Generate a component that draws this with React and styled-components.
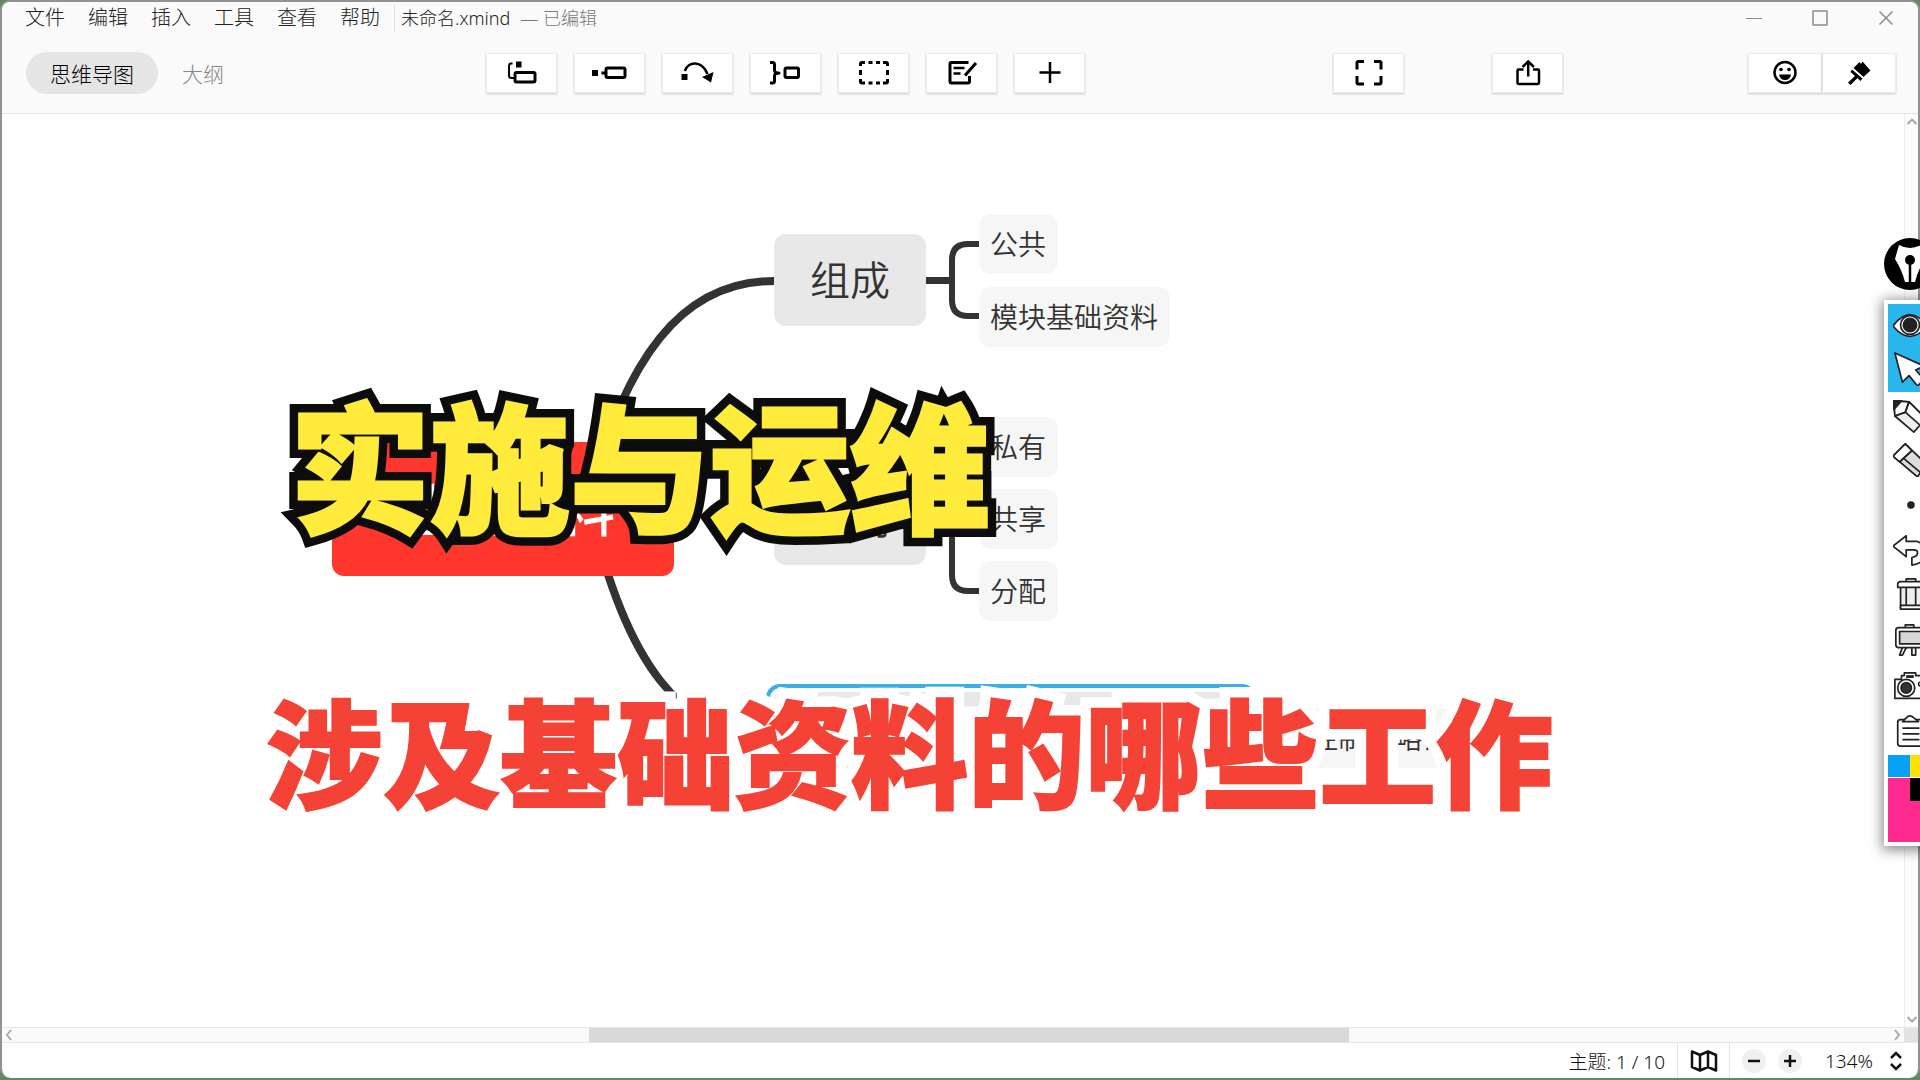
import React, { useState } from 'react';
import styled, { createGlobalStyle, css } from 'styled-components';

const GlobalStyle = createGlobalStyle`
    * {
        box-sizing: border-box;
    }
    body {
        margin: 0;
        background-color: #5f8c5f;
        font-family: "Noto Sans", "Noto Sans CJK SC", sans-serif;
        font-weight: 300;
        color: #222;
    }
    button {
        padding: 0;
        border: 0;
        background: transparent;
        color: inherit;
        font: inherit;
        cursor: pointer;
    }
    svg {
        display: block;
    }
`;

const Page = styled.div`
    position: relative;
    display: flex;
    flex-direction: column;
    min-height: 100vh;
    padding: 0 0 2px;
    overflow: hidden;
`;

const AppWindow = styled.div`
    flex: 1;
    display: flex;
    flex-direction: column;
    background-color: #fff;
    border: 2px solid #929292;
    border-bottom: 0;
    border-radius: 10px;
    overflow: hidden;
`;

const TitleBar = styled.header`
    display: flex;
    align-items: center;
    height: 32px;
    padding: 0 24px 0 23px;
    background-color: #fafafa;
`;

const Menu = styled.nav`
    display: flex;
    gap: 23px;
    font-size: 20px;
    line-height: 28px;
    padding: 0 14px 0 0;
    border-right: 1px solid #e2e2e2;
`;

const FileName = styled.span`
    font-size: 18px;
    line-height: 28px;
    margin: 0 0 0 6px;
`;

const FileState = styled(FileName)`
    margin: 0 0 0 10px;
    color: #777;
`;

const WindowButtons = styled.div`
    display: flex;
    gap: 50px;
    margin: 0 0 0 auto;
    color: #8c8c8c;
`;

const Toolbar = styled.div`
    display: grid;
    grid-template-columns: 484fr 847fr 159fr 256fr 170fr;
    align-items: center;
    padding: 18px 0 19px;
    background-color: #fafafa;
    border-bottom: 1px solid #e4e4e4;
`;

const Tabs = styled.div`
    display: flex;
    align-items: center;
    padding: 0 0 0 24px;
`;

const Tab = styled.button`
    height: 42px;
    padding: 0 24px 1px;
    border-radius: 21px;
    font-size: 21px;
    color: #858585;
    ${({ $active }) => $active && css`
        background-color: #e5e5e5;
        color: #000;
    `}
`;

const Tools = styled.div`
    display: flex;
    gap: 17px;
`;

const ToolButton = styled.button`
    display: flex;
    justify-content: center;
    align-items: center;
    width: ${({ $wide }) => ($wide ? 74 : 71)}px;
    height: 40px;
    background-color: #fff;
    border: 1px solid #ececec;
    box-shadow: 0 1px 2px #0003;
    color: #000;
`;

const ToolPair = styled.div`
    display: flex;
    & > button + button {
        border-left: 1px solid #e4e4e4;
    }
`;

const Workspace = styled.div`
    flex: 1;
    display: flex;
    min-height: 500px;
`;

const Canvas = styled.main`
    flex: 1;
    position: relative;
`;

const Links = styled.svg`
    position: absolute;
    left: 0;
    top: 0;
    overflow: visible;
    fill: none;
    stroke: #333;
`;

const Node = styled.div`
    position: absolute;
    left: ${({ $x }) => $x}px;
    top: ${({ $y }) => $y}px;
    display: flex;
    justify-content: center;
    align-items: center;
    white-space: nowrap;
    border-radius: 12px;
    font-family: "Noto Sans CJK SC", sans-serif;
    font-weight: 350;
    color: #333;
`;

const Root = styled(Node)`
    width: 342px;
    height: 134px;
    padding: 0 0 6px;
    background-color: #ff372c;
    color: #fff;
    font-size: 56px;
    font-weight: 500;
`;

const Topic = styled(Node)`
    min-width: 152px;
    height: 92px;
    padding: 0 0 4px;
    background-color: #e8e8e8;
    font-size: 40px;
    ${({ $selected }) => $selected && css`
        width: 474px;
        border-radius: 6px;
        outline: 4px solid #3aaee5;
        outline-offset: 4px;
    `}
`;

const Subtopic = styled(Node)`
    height: 60px;
    padding: 0 12px 2px 11px;
    background-color: #f6f6f6;
    font-size: 28px;
`;

const Caption = styled.p`
    position: absolute;
    z-index: 1;
    margin: 0;
    white-space: nowrap;
    font-family: "Noto Sans CJK SC", sans-serif;
    font-weight: 900;
    &::before {
        content: attr(data-text);
        position: absolute;
        left: 0;
        top: 0;
        z-index: -1;
    }
`;

const Headline = styled(Caption)`
    left: 288px;
    top: 277px;
    font-size: 140px;
    line-height: 140px;
    color: #ffeb3b;
    -webkit-text-stroke: 3px #ffeb3b;
    &::before {
        -webkit-text-stroke: 20px #0c0c0c;
    }
`;

const Subline = styled(Caption)`
    left: 264px;
    top: 576px;
    font-size: 117px;
    line-height: 117px;
    color: #f44336;
    -webkit-text-stroke: 2px #f44336;
    &::before {
        -webkit-text-stroke: 23px #fff;
    }
`;

const VerticalScroll = styled.div`
    display: flex;
    flex-direction: column;
    justify-content: space-between;
    align-items: center;
    width: 14px;
    padding: 2px 0;
    border-left: 1px solid #ececec;
    background-color: #fcfcfc;
    color: #aaa;
`;

const HorizontalScroll = styled.div`
    display: flex;
    align-items: stretch;
    height: 16px;
    border: solid #e6e6e6;
    border-width: 1px 0;
    background-color: #fafafa;
    color: #aaa;
`;

const ScrollTrack = styled.div`
    flex: 1;
    display: grid;
    grid-template-columns: 572fr 760fr 540fr;
`;

const ScrollThumb = styled.div`
    grid-column: 2;
    background-color: #d9d9d9;
`;

const ScrollCorner = styled.div`
    width: 14px;
    background-color: #e2e2e2;
`;

const ScrollArrow = styled.button`
    display: flex;
    justify-content: center;
    align-items: center;
    width: 14px;
`;

const StatusBar = styled.footer`
    display: flex;
    justify-content: flex-end;
    align-items: stretch;
    height: 35px;
    padding: 0 14px 0 0;
    font-size: 19px;
    color: #111;
`;

const TopicCount = styled.span`
    display: flex;
    align-items: center;
    padding: 0 12px 0 0;
`;

const MapButton = styled.button`
    display: flex;
    justify-content: center;
    align-items: center;
    width: 53px;
    border: solid #e4e4e4;
    border-width: 0 1px;
`;

const ZoomArea = styled.div`
    display: flex;
    align-items: center;
    gap: 12px;
    padding: 0 0 0 12px;
`;

const RoundButton = styled.button`
    display: flex;
    justify-content: center;
    align-items: center;
    width: 24px;
    height: 24px;
    border-radius: 12px;
    background-color: #f0f0f0;
`;

const ZoomValue = styled.button`
    display: flex;
    align-items: center;
    gap: 15px;
    padding: 0 0 0 11px;
`;

const PenBadge = styled.button`
    position: absolute;
    right: -16px;
    top: 238px;
    z-index: 2;
`;

const Palette = styled.aside`
    position: absolute;
    right: -16px;
    top: 300px;
    z-index: 2;
    width: 52px;
    padding: 4px;
    background-color: #fff;
    box-shadow: 0 2px 12px 2px #0007;
`;

const PaletteButton = styled.button`
    display: flex;
    justify-content: center;
    align-items: center;
    width: 44px;
    height: ${({ $height }) => $height || 45}px;
    background-color: ${({ $active }) => ($active ? '#29b6ec' : '#fff')};
`;

const Swatches = styled.div`
    display: grid;
    grid-template-columns: 22px 22px;
    grid-template-rows: 22px 23px 40px;
    row-gap: 1px;
`;

const Swatch = styled.button`
    background-color: ${({ $color }) => $color};
    &.current {
        grid-area: 2 / 1 / 4 / 3;
    }
    &.black {
        grid-area: 2 / 2 / 3 / 3;
    }
`;

const Icon = ({ children, width = 36, height = 28, box }) => (
    <svg width={width} height={height} viewBox={box || `0 -1 ${width} ${height}`}
        fill="none" stroke="currentColor" strokeWidth="3" strokeLinejoin="round" aria-hidden="true">
        {children}
    </svg>
);

const Chevron = ({ d }) => (
    <Icon width={12} height={12} box="0 0 12 12"><path strokeWidth="2" d={d} /></Icon>
);

const tools = [
    {
        name: '主题',
        icon: <>
            <rect x="12" y="1.5" width="5.5" height="6" fill="currentColor" stroke="none" />
            <rect x="11" y="12.5" width="20" height="9.5" rx="1.5" />
            <path strokeWidth="2" d="M8.5 3.5H7Q5 3.5 5 6V15.5Q5 18 7.5 18H10" />
        </>,
    },
    {
        name: '子主题',
        icon: <>
            <rect x="0" y="10" width="6" height="6" fill="currentColor" stroke="none" />
            <rect x="14" y="8" width="19" height="9.5" rx="1.5" />
            <path d="M9.5 13H14" />
        </>,
    },
    {
        name: '联系',
        icon: <>
            <rect x="1.5" y="14" width="6" height="6" fill="currentColor" stroke="none" />
            <path strokeWidth="2.5" d="M4.8 11C8 1 22 0 27.5 14" />
            <path fill="currentColor" stroke="none" d="M22 17L33.5 12L31 22.5Z" />
        </>,
    },
    {
        name: '概要',
        icon: <>
            <path d="M2 2.5H4.5Q6.5 2.5 6.5 4.5V10Q6.5 13 11 13Q6.5 13 6.5 16V21Q6.5 23 4.5 23H2" />
            <rect x="17" y="8" width="13.5" height="9.5" rx="1.5" />
        </>,
    },
    {
        name: '外框',
        icon: <path d="M4.5 6V4Q4.5 2.5 6 2.5H9M12.5 2.5H16.5M20 2.5H24M27 2.5H30Q31.5 2.5 31.5 4V6M31.5 10V15M31.5 19V21.5Q31.5 23 30 23H27M24 23H20M16.5 23H12.5M9 23H6Q4.5 23 4.5 21.5V19M4.5 15V10" />,
    },
    {
        name: '笔记',
        icon: <>
            <path d="M24.5 2.5H7.5Q6 2.5 6 4V21.5Q6 23 7.5 23H24Q25.5 23 25.5 21.5V16" />
            <path strokeWidth="2.5" d="M9.5 8H20.5M9.5 13.5H16.5" />
            <path d="M32 3L21 15.5" />
        </>,
    },
    { name: '插入', icon: <path strokeWidth="2.5" d="M18 2V23M7.5 12.5H28.5" /> },
];

const paletteItems = [
    {
        name: '显示', height: 41, active: true,
        icon: <>
            <path fill="#fff" d="M0 19Q18 -5 36 19Q18 41 0 19Z" />
            <circle cx="18" cy="18" r="10" fill="#fff" />
            <circle cx="18" cy="18" r="7" fill="#222" />
        </>,
    },
    { name: '选择', height: 47, active: true, icon: <path fill="#fff" d="M2 1L10 32L17 25L26 36L33 29L24 19L33 15Z" /> },
    {
        name: '铅笔', height: 47,
        icon: <>
            <path fill="#eee" d="M1 2L17 3L35 21L22 35L2 18Z" />
            <path fill="#fff" d="M1 2L17 3L13 14L2 18ZM17 3L13 14L29 28L35 21Z" />
            <path fill="#222" d="M1 2L9 2L1 11Z" />
            <path d="M2 18L13 14L17 3" />
        </>,
    },
    {
        name: '橡皮', height: 42,
        icon: <>
            <path fill="#ddd" d="M0 14L13 1L35 22L26 36Z" />
            <path fill="#fff" d="M0 14L13 1L20 8L7 20Z" />
            <path d="M7 20L20 8M11 16L30 32" />
        </>,
    },
    { name: '笔粗细', icon: <circle cx="19" cy="19" r="4" fill="#222" stroke="none" /> },
    { name: '撤销', icon: <path fill="#fff" d="M0 15L14 4V10H25Q34 12 34 22Q33 34 20 35V27Q26 26 26 22Q26 19 22 19H14V26Z" /> },
    {
        name: '清除',
        icon: <>
            <path fill="#eee" d="M8 9H32V33H8Z" />
            <path fill="#fff" d="M5 8Q5 5 8 5H32Q35 5 35 8V11H5ZM14 5V2H24V5M8 30H32V34H8ZM14 11V30M24 11V30" />
        </>,
    },
    {
        name: '白板', height: 47,
        icon: <>
            <path fill="#fff" d="M10 26L7 34H10L14 26M20 26V34H24V26" />
            <rect x="3" y="5" width="32" height="21" rx="3" fill="#fff" />
            <rect x="7" y="9" width="24" height="13" fill="#d8d8d8" />
            <path d="M13 5V2H22V5" />
        </>,
    },
    {
        name: '截图',
        icon: <>
            <path fill="#fff" d="M2 11H9V7H12V4H24V7H30V11H36V31H2Z" />
            <circle cx="14" cy="20" r="9" fill="#fff" />
            <circle cx="14" cy="20" r="5.5" fill="#333" />
            <path d="M14 8H22" strokeWidth="3" />
            <circle cx="29" cy="16" r="2" />
        </>,
    },
    {
        name: '剪贴板', height: 47,
        icon: <>
            <rect x="5" y="5" width="28" height="28" rx="3" fill="#fff" />
            <path fill="#fff" d="M10 7L14 3Q18 -1 22 3L27 7Z" />
            <path d="M10 14H28M10 20H28M10 26H28" />
        </>,
    },
];

// left, top and text of every second-level card on the board
const subtopics = [
    [977, 100, '公共'],
    [977, 173, '模块基础资料'],
    [977, 303, '私有'],
    [977, 375, '共享'],
    [977, 447, '分配'],
    [1297, 594, '控制策略设置'],
];

const App = () => {
    const [view, setView] = useState('map');
    const [zoom, setZoom] = useState(134);

    return (
        <Page>
            <GlobalStyle />
            <AppWindow>
                <TitleBar>
                    <Menu>
                        {['文件', '编辑', '插入', '工具', '查看', '帮助'].map(item => <button key={item}>{item}</button>)}
                    </Menu>
                    <FileName>未命名.xmind</FileName>
                    <FileState>— 已编辑</FileState>
                    <WindowButtons>
                        <button aria-label="最小化"><Icon width={16} height={16} box="0 0 16 16"><path strokeWidth="1" d="M0 8.5H16" /></Icon></button>
                        <button aria-label="最大化"><Icon width={16} height={16} box="0 0 16 16"><rect x="1" y="1" width="14" height="14" strokeWidth="1.5" /></Icon></button>
                        <button aria-label="关闭"><Icon width={16} height={16} box="0 0 16 16"><path strokeWidth="1.5" d="M1.5 1.5L14.5 14.5M14.5 1.5L1.5 14.5" /></Icon></button>
                    </WindowButtons>
                </TitleBar>
                <Toolbar>
                    <Tabs>
                        <Tab $active={view === 'map'} onClick={() => setView('map')}>思维导图</Tab>
                        <Tab $active={view === 'outline'} onClick={() => setView('outline')}>大纲</Tab>
                    </Tabs>
                    <Tools>
                        {tools.map(({ name, icon }) => (
                            <ToolButton key={name} aria-label={name}><Icon>{icon}</Icon></ToolButton>
                        ))}
                    </Tools>
                    <ToolButton aria-label="全屏">
                        <Icon><path d="M6 9.5V3Q6 1.5 7.5 1.5H13M23 1.5H28.5Q30 1.5 30 3V9.5M30 16V22.5Q30 24 28.5 24H23M13 24H7.5Q6 24 6 22.5V16" /></Icon>
                    </ToolButton>
                    <ToolButton aria-label="分享">
                        <Icon>
                            <path strokeWidth="2.5" d="M13.5 9.5H8.5Q7.5 9.5 7.5 10.5V22.5Q7.5 24 9 24H27.5Q29 24 29 22.5V10.5Q29 9.5 28 9.5H23" />
                            <path strokeWidth="2.5" strokeLinejoin="miter" d="M18.2 16.5V2M12.5 7L18.2 1.5L24 7" />
                        </Icon>
                    </ToolButton>
                    <ToolPair>
                        <ToolButton $wide aria-label="标记">
                            <Icon>
                                <circle cx="18" cy="12.5" r="10.5" strokeWidth="2.5" />
                                <path fill="currentColor" stroke="none" d="M12 14.5H24Q23 20 18 20Q13 20 12 14.5Z" />
                                <circle cx="14" cy="9.5" r="1.8" fill="currentColor" stroke="none" />
                                <circle cx="22" cy="9.5" r="1.8" fill="currentColor" stroke="none" />
                            </Icon>
                        </ToolButton>
                        <ToolButton $wide aria-label="格式">
                            <Icon>
                                <path fill="currentColor" stroke="none" d="M18.5 2L20 4L21.5 1.5L29.5 10.5L22.5 17L12.5 8ZM11 9.5L21.5 18.5L19.5 21L16.5 18L9.5 25L7 22.5L14 16L9.5 12Z" />
                            </Icon>
                        </ToolButton>
                    </ToolPair>
                </Toolbar>
                <Workspace>
                    <Canvas>
                        <Links width="1" height="1" aria-hidden="true">
                            <path strokeWidth="8" d="M585 386C624 246 678 167 772 167M588 395C623 546 678 624 772 624" />
                            <path strokeWidth="7" d="M924 166.5H950M924 405H950M1244 624H1297" />
                            <path strokeWidth="6" d="M977 130H966Q950 130 950 146V186Q950 202 966 202H977M977 333H966Q950 333 950 349V461Q950 477 966 477H977M950 405H977" />
                        </Links>
                        <Root $x={330} $y={328}>基础资料</Root>
                        <Topic $x={772} $y={120}>组成</Topic>
                        <Topic $x={772} $y={359}>类别</Topic>
                        <Topic $x={772} $y={578} $selected />
                        {subtopics.map(([x, y, text]) => <Subtopic key={text} $x={x} $y={y}>{text}</Subtopic>)}
                        <Headline data-text="实施与运维">实施与运维</Headline>
                        <Subline data-text="涉及基础资料的哪些工作">涉及基础资料的哪些工作</Subline>
                    </Canvas>
                    <VerticalScroll>
                        <ScrollArrow aria-label="向上"><Chevron d="M1.5 8L6 3.5L10.5 8" /></ScrollArrow>
                        <ScrollArrow aria-label="向下"><Chevron d="M1.5 4L6 8.5L10.5 4" /></ScrollArrow>
                    </VerticalScroll>
                </Workspace>
                <HorizontalScroll>
                    <ScrollArrow aria-label="向左"><Chevron d="M8 1L4 6L8 11" /></ScrollArrow>
                    <ScrollTrack><ScrollThumb /></ScrollTrack>
                    <ScrollArrow aria-label="向右"><Chevron d="M4 1L8 6L4 11" /></ScrollArrow>
                    <ScrollCorner />
                </HorizontalScroll>
                <StatusBar>
                    <TopicCount>主题: 1 / 10</TopicCount>
                    <MapButton aria-label="导航图">
                        <Icon width={28} height={24} box="0 0 28 24">
                            <path strokeWidth="2.5" d="M2 2.5L10 6L18 2.5L26 6V21.5L18 18L10 21.5L2 18ZM10 6V21.5M18 2.5V18" />
                        </Icon>
                    </MapButton>
                    <ZoomArea>
                        <RoundButton aria-label="缩小" onClick={() => setZoom(zoom - 10)}>
                            <Icon width={14} height={14} box="0 0 14 14"><path strokeWidth="2.5" d="M1 7H13" /></Icon>
                        </RoundButton>
                        <RoundButton aria-label="放大" onClick={() => setZoom(zoom + 10)}>
                            <Icon width={14} height={14} box="0 0 14 14"><path strokeWidth="2.5" d="M1 7H13M7 1V13" /></Icon>
                        </RoundButton>
                        <ZoomValue>
                            {zoom}%
                            <Icon width={16} height={20} box="0 0 16 20"><path strokeWidth="2.5" strokeLinejoin="miter" d="M3 7L8 2L13 7M3 13L8 18L13 13" /></Icon>
                        </ZoomValue>
                    </ZoomArea>
                </StatusBar>
            </AppWindow>
            <PenBadge aria-label="画笔">
                <svg width="52" height="52" viewBox="0 0 52 52" aria-hidden="true">
                    <circle cx="26" cy="26" r="26" fill="#000" />
                    <path fill="#fff" d="M15 7Q26 13 37 7L41 21Q34 32 31 44H21Q18 32 11 21Z" />
                    <circle cx="26" cy="22" r="5" fill="#000" />
                    <path stroke="#000" strokeWidth="2.5" d="M26 24V44" />
                </svg>
            </PenBadge>
            <Palette>
                {paletteItems.map(({ name, height, active, icon }) => (
                    <PaletteButton key={name} aria-label={name} $height={height} $active={active}>
                        <svg width="34" height="34" viewBox="0 0 36 36" fill="none" stroke="#222" strokeWidth="1.8" strokeLinejoin="round" aria-hidden="true">{icon}</svg>
                    </PaletteButton>
                ))}
                <Swatches>
                    <Swatch $color="#09a1f6" aria-label="蓝色" />
                    <Swatch $color="#ffe100" aria-label="黄色" />
                    <Swatch $color="#ff2a90" className="current" aria-label="粉色" />
                    <Swatch $color="#000" className="black" aria-label="黑色" />
                </Swatches>
            </Palette>
        </Page>
    );
};

export default App;
